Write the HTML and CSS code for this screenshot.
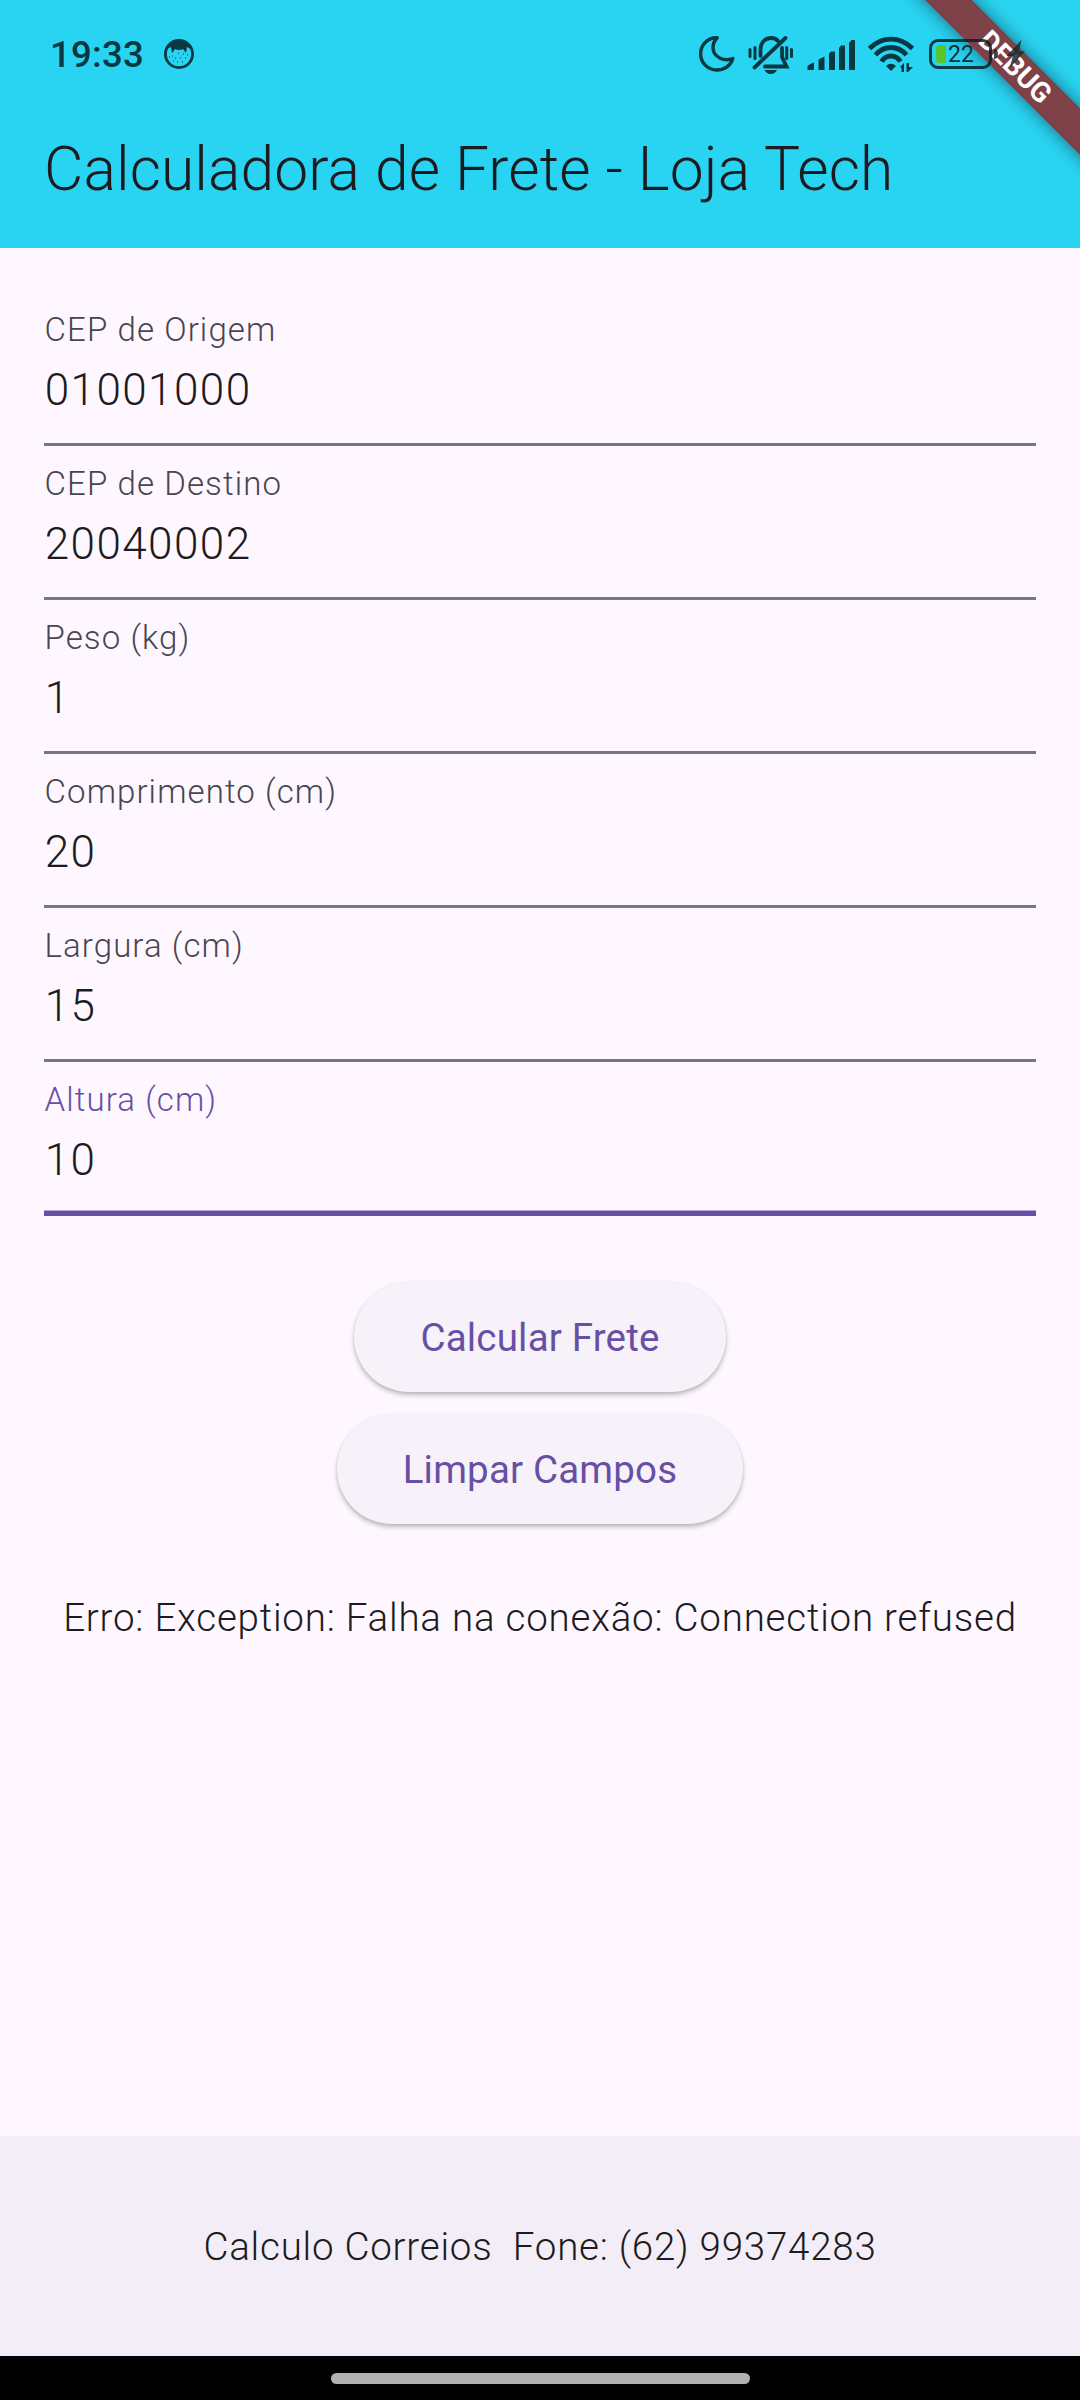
FILE: index.html
```html
<!DOCTYPE html>
<html lang="pt-BR">
<head>
<meta charset="utf-8">
<title>Calculadora de Frete - Loja Tech</title>
<link rel="stylesheet" href="styles.css">
</head>
<body>
<div class="screen">
  <header class="app-bar">
    <div class="status-bar">
      <div class="status-left">
        <span class="clock">19:33</span>
        <svg class="face" viewBox="0 0 30 30" width="30" height="30">
          <circle cx="15" cy="15" r="13.6" fill="none" stroke="currentColor" stroke-width="2.8"/>
          <path d="M3 10Q7 1 15 1T27 10L23 8L22 14L19 10Q15 12 11 10L8 14L7 8Z" fill="currentColor"/>
          <path d="M8 17h1M14 14h1M19 15h1M11 19h1M16 19h1M21 19h1M13 23h1M18 23h1M5 18h1M23 16h1M9 22h1" stroke="currentColor" stroke-width="1.2"/>
        </svg>
      </div>
      <div class="status-right">
        <svg class="moon" viewBox="0 0 36 36" width="36" height="36">
          <path d="M18.2 1.8C8 1.500 1.500 9.500 1.600 18C1.800 27 9 34 17.800 34C25.500 34 32 29.500 33.800 22.500C25 26 14.500 21 14 12C13.900 7.500 15.500 4.500 18.200 1.800Z" fill="none" stroke="currentColor" stroke-width="3.4" stroke-linejoin="round"/>
        </svg>
        <svg class="bell" viewBox="0 0 46 38" width="46" height="38">
          <g fill="none" stroke="currentColor" stroke-width="3.800" stroke-linecap="round">
            <path d="M12.500 20V14C12.500 7 16.500 2 23 2C26 2 28.500 3 30 5"/>
            <path d="M34 12V21L38.500 30.500H17"/>
            <path d="M6.500 31.500L37.500 2"/>
            <path d="M2 13.500v7M7 11.500v11M38.700 11.500v11M43.500 13.500v7" stroke-width="3"/>
          </g>
          <path d="M16.500 34H29Q27 38 22.800 38T16.500 34Z" fill="currentColor"/>
        </svg>
        <svg class="signal" viewBox="0 0 48 32" width="48" height="32">
          <path d="M.5 31V27Q3 24.500 7 23.500V31ZM11.500 31V20.500L17.500 17.500V31ZM22 31V14.500L24 12.500H28V31ZM32 31V9L34 6.500H38V31ZM42 31V4L44.500 1H48V31Z" fill="currentColor"/>
        </svg>
        <svg class="wifi" viewBox="0 0 46 36" width="46" height="36">
          <g fill="none" stroke="currentColor" stroke-width="4.800">
            <path d="M1.500 12.500Q11 3.200 23 3.200T44.500 12.500"/>
            <path d="M7.500 19Q14 11.500 23 11.500T38.500 19"/>
            <path d="M13.500 25.500Q17 20 23 20T32.500 25.500"/>
          </g>
          <path d="M18 30Q23 25.500 28 30L23 35Z" fill="currentColor"/>
          <path d="M32 31L36 27V36H33.500V32ZM38.500 27H41V31H45L40 36H38.500Z" fill="currentColor"/>
        </svg>
        <span class="battery"><span class="charge"></span><span class="percent">22</span></span>
        <svg class="bolt" viewBox="0 0 32 30" width="32" height="30">
          <path d="M1 10Q5 10 5 15T1 20Z" fill="currentColor"/>
          <path d="M28.500 1L13.500 17H20L16.500 29L32 12.500H26Z" fill="currentColor"/>
        </svg>
      </div>
    </div>
    <h1 class="title">Calculadora de Frete - Loja Tech</h1>
    <div class="debug-banner">DEBUG</div>
  </header>
  <main class="content">
    <div class="field"><span class="label">CEP de Origem</span><span class="value">01001000</span></div>
    <div class="field"><span class="label">CEP de Destino</span><span class="value">20040002</span></div>
    <div class="field"><span class="label">Peso (kg)</span><span class="value">1</span></div>
    <div class="field"><span class="label">Comprimento (cm)</span><span class="value">20</span></div>
    <div class="field"><span class="label">Largura (cm)</span><span class="value">15</span></div>
    <div class="field focused"><span class="label">Altura (cm)</span><span class="value">10</span></div>
    <div class="actions">
      <button class="button">Calcular Frete</button>
      <button class="button">Limpar Campos</button>
    </div>
    <p class="message">Erro: Exception: Falha na conexão: Connection refused</p>
  </main>
  <footer class="footer">Calculo Correios&nbsp; Fone: (62) 99374283</footer>
  <div class="nav-bar"><span class="handle"></span></div>
</div>
</body>
</html>
```
FILE: styles.css
```css
* { box-sizing: border-box; }

body {
  margin: 0;
  font-family: Roboto, sans-serif;
  font-weight: 300;
  color: #1d1b20;
}

.screen {
  display: flex;
  flex-direction: column;
  width: 1080px;
  height: 2400px;
  background: #fef7ff;
  overflow: hidden;
}

.app-bar {
  position: relative;
  height: 248px;
  background: #29d3f2;
  overflow: hidden;
}

.status-bar {
  position: relative;
  z-index: 2;
  display: flex;
  justify-content: space-between;
  height: 94px;
  padding: 0 55px 0 50px;
  color: #083842;
}

.status-left,
.status-right { display: flex; align-items: flex-start; }

.clock {
  margin-top: 33px;
  font-size: 36.5px;
  line-height: 44px;
  font-weight: 500;
  letter-spacing: 0.3px;
}

.face { margin: 39px 0 0 20px; }
.moon { margin: 36px 13px 0 0; }
.bell { margin: 36px 13px 0 0; }
.signal { margin: 39px 13px 0 0; }
.wifi { margin: 36px 15px 0 0; }

.battery {
  display: flex;
  align-items: center;
  width: 63px;
  height: 30px;
  margin-top: 39px;
  padding-left: 4px;
  border: 3px solid rgba(8, 32, 40, 0.85);
  border-radius: 9px;
}

.charge {
  width: 10px;
  height: 18px;
  border-radius: 4px 0 0 4px;
  background: #56c628;
}

.percent {
  margin: 2px 0 0 2px;
  font-size: 23px;
  line-height: 24px;
  font-weight: 400;
  color: #0c3039;
}

.bolt { margin: 39px 0 0 1px; color: #1b2a2e; opacity: 0.85; }

.title {
  margin: 41px 0 0 44px;
  font-size: 60.5px;
  line-height: 70px;
  font-weight: 300;
  letter-spacing: 0.11px;
}

.debug-banner {
  position: absolute;
  top: 48.5px;
  left: 864px;
  width: 300px;
  height: 33px;
  padding-left: 4px;
  transform: rotate(45deg);
  background: #7e4148;
  box-shadow: 0 0 17px rgba(0, 0, 0, 0.5);
  color: #fff;
  font-size: 28px;
  line-height: 33px;
  font-weight: 700;
  text-align: center;
}

.content {
  flex: 1;
  display: flex;
  flex-direction: column;
  padding: 44px 44px 0;
}

.field {
  display: flex;
  flex-direction: column;
  height: 154px;
  padding-top: 18px;
  border-bottom: 3px solid #7b757f;
}

.label {
  padding-left: 0.5px;
  font-size: 33px;
  line-height: 40px;
  letter-spacing: 1.1px;
  color: #49454f;
}

.value {
  padding-left: 0.7px;
  font-size: 44px;
  line-height: 66px;
  margin-top: 7px;
  letter-spacing: 1.45px;
}

.focused {
  border-bottom: 5px solid #6750a4;
  box-shadow: inset 0 -1px #b5a7d2;
}
.focused .label { color: #6750a4; }

.actions {
  display: flex;
  flex-direction: column;
  align-items: center;
  gap: 22px;
  margin-top: 66px;
}

.button {
  height: 110px;
  padding: 0 66px;
  border: 0;
  border-radius: 55px;
  background: #f7f2fa;
  box-shadow: 0 3px 5px rgba(0, 0, 0, 0.24), 0 1px 3px rgba(0, 0, 0, 0.08);
  font-family: inherit;
  font-size: 38.5px;
  font-weight: 400;
  letter-spacing: 0.18px;
  color: #6750a4;
}

.message {
  margin: 66px 0 0;
  font-size: 38.5px;
  line-height: 55px;
  letter-spacing: 0.79px;
  text-align: center;
  white-space: nowrap;
}

.footer {
  display: flex;
  align-items: center;
  justify-content: center;
  height: 220px;
  background: #f3edf7;
  font-size: 38.5px;
  letter-spacing: 0.77px;
}

.nav-bar {
  display: flex;
  justify-content: center;
  height: 44px;
  padding-top: 17px;
  background: #000;
}

.handle {
  width: 419px;
  height: 11px;
  border-radius: 6px;
  background: #b1b1b1;
}
```
